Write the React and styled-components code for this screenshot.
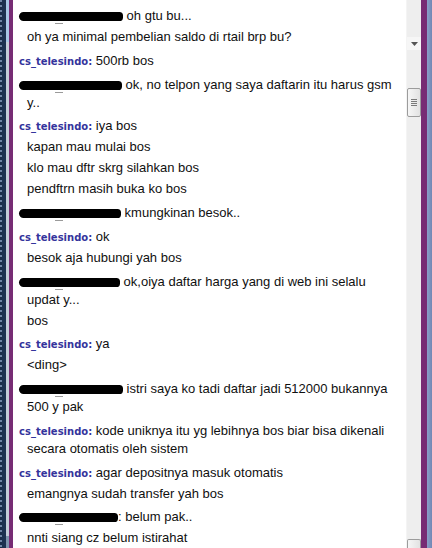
import styled, { createGlobalStyle } from "styled-components";

const GlobalStyle = createGlobalStyle`
  html, body {
    margin: 0;
    padding: 0;
    background: #ffffff;
  }
`;

const CHAT = [
  { blob: 104, paras: [[" oh gtu bu..."], ["oh ya minimal pembelian saldo di rtail brp bu?"]] },
  { cs: true, paras: [["500rb bos"]] },
  { blob: 103, paras: [[" ok, no telpon yang saya daftarin itu harus gsm", "y.."]] },
  {
    cs: true,
    paras: [["iya bos"], ["kapan mau mulai bos"], ["klo mau dftr skrg silahkan bos"], ["pendftrn masih buka ko bos"]],
  },
  { blob: 102, paras: [[" kmungkinan besok.."]] },
  { cs: true, paras: [["ok"], ["besok aja hubungi yah bos"]] },
  { blob: 101, paras: [[" ok,oiya daftar harga yang di web ini selalu", "updat y..."], ["bos"]] },
  { cs: true, paras: [["ya"], ["<ding>"]] },
  { blob: 104, paras: [[" istri saya ko tadi daftar jadi 512000 bukannya", "500 y pak"]] },
  { cs: true, paras: [["kode uniknya itu yg lebihnya bos biar bisa dikenali", "secara otomatis oleh sistem"]] },
  { cs: true, paras: [["agar depositnya masuk otomatis"], ["emangnya sudah transfer yah bos"]] },
  { blob: 99, paras: [[": belum pak.."], ["nnti siang cz belum istirahat"]] },
];

const Window = styled.div`
  width: 432px;
  height: 548px;
  display: flex;
  overflow: hidden;
`;

const LeftFrame = styled.div`
  width: 13px;
  flex: none;
  display: flex;
`;

const Dashes = styled.div`
  width: 6px;
  background:
    repeating-linear-gradient(to bottom, #6f85a6 0 2px, #1b2d4a 2px 5px) left / 2px 100% no-repeat,
    #1d3150;
`;

const Glass = styled.div`
  width: 3px;
  background: linear-gradient(to bottom, #a9c7e6 0 42px, #c3ccd8 42px 536px, #7f93ad 536px);
`;

const Purple = styled.div`
  width: ${(p) => p.$w}px;
  background: #772c74;
`;

const RightEdge = styled.div`
  width: 5px;
  flex: none;
  background: linear-gradient(to right, #8aa0c9, #7287b4);
`;

const ChatArea = styled.div`
  flex: 1;
  background: #ffffff;
  padding: 7px 0 0 6px;
  font-family: "Liberation Sans", Arial, sans-serif;
  font-size: 13px;
  color: #101010;
  white-space: nowrap;
  overflow: hidden;
`;

const Block = styled.div`
  padding-left: 8px;
  margin-bottom: 5.75px;
`;

const Para = styled.p`
  margin: 0 0 3px;
  line-height: 18px;
  &:last-child {
    margin-bottom: 0;
  }
  &:first-child {
    text-indent: -8px;
  }
`;

const Name = styled.span`
  font-family: "DejaVu Sans", Verdana, sans-serif;
  font-weight: bold;
  font-size: 10px;
  line-height: 10px;
  color: #34349c;
`;

const Blob = styled.span`
  position: relative;
  display: inline-block;
  width: ${(p) => p.$w}px;
  height: 9px;
  border-radius: 5px 4px 4px 5px;
  background: #000000;
  vertical-align: -1px;
  text-indent: 0;

  &::after {
    content: "";
    position: absolute;
    left: 36px;
    bottom: -3px;
    width: 8px;
    height: 1px;
    background: #9a9a9a;
  }
`;

const Scrollbar = styled.div`
  width: 14px;
  flex: none;
  background: #eeeeee;
  border-left: 1px solid #f4f4f4;
  display: flex;
  flex-direction: column;
  align-items: center;
`;

const ArrowButton = styled.div`
  margin-top: 37px;
  width: 14px;
  height: 13px;
  background: #f6f6f6;
  display: flex;
  align-items: center;
  justify-content: center;
`;

const Thumb = styled.div`
  margin-top: 38px;
  width: 12px;
  height: 27px;
  border: 1px solid #9c9c9c;
  border-radius: 2px;
  background: linear-gradient(to right, #f6f6f6, #e2e2e2);
  display: flex;
  flex-direction: column;
  align-items: center;
  justify-content: center;
  gap: 1px;
`;

const Grip = styled.div`
  width: 6px;
  height: 1px;
  background: #7a7a7a;
`;

const Spacer = styled.div`
  flex: 1;
`;

const BottomButton = styled.div`
  width: 12px;
  height: 8px;
  border: 1px solid #9c9c9c;
  border-bottom: none;
  border-radius: 2px 2px 0 0;
  background: linear-gradient(to right, #f6f6f6, #e2e2e2);
`;

const renderLines = (lines) =>
  lines.map((l, i) => (
    <span key={i}>
      {i > 0 && <br />}
      {l}
    </span>
  ));

export default function App() {
  return (
    <>
      <GlobalStyle />
      <Window>
        <LeftFrame>
          <Dashes />
          <Glass />
          <Purple $w={4} />
        </LeftFrame>
        <ChatArea>
          {CHAT.map((msg, i) => (
            <Block key={i}>
              {msg.paras.map((lines, j) => (
                <Para key={j}>
                  {j === 0 && (msg.cs ? <Name>cs_telesindo:</Name> : <Blob $w={msg.blob} />)}
                  {j === 0 && msg.cs && " "}
                  {renderLines(lines)}
                </Para>
              ))}
            </Block>
          ))}
        </ChatArea>
        <Scrollbar>
          <ArrowButton>
            <svg width="7" height="4" viewBox="0 0 7 4">
              <path d="M0 0h7L3.5 4z" fill="#555555" />
            </svg>
          </ArrowButton>
          <Thumb>
            <Grip />
            <Grip />
            <Grip />
            <Grip />
          </Thumb>
          <Spacer />
          <BottomButton />
        </Scrollbar>
        <Purple $w={6} />
        <RightEdge />
      </Window>
    </>
  );
}
